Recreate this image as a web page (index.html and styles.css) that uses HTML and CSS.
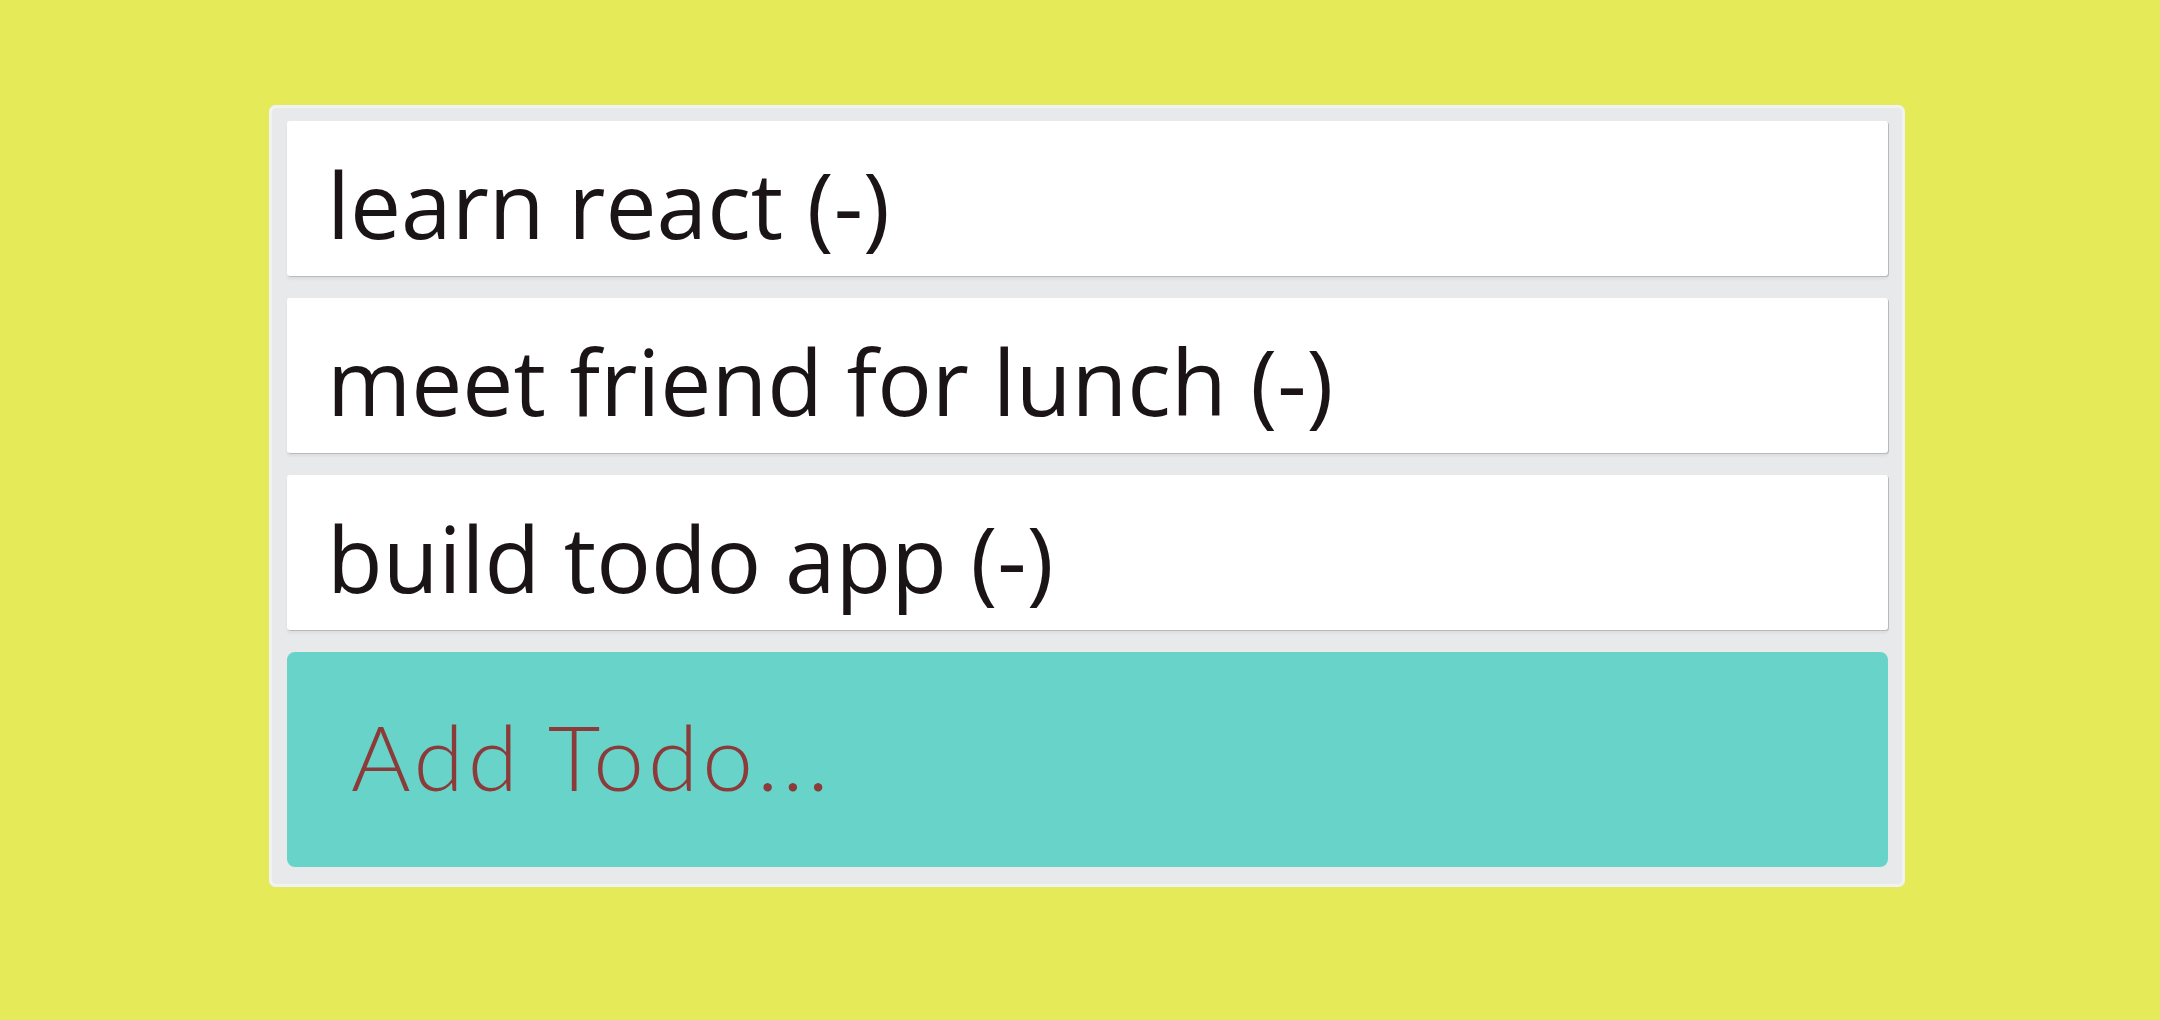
FILE: index.html
```html
<!DOCTYPE html>
<html>
<head>
<meta charset="utf-8">
<link rel="stylesheet" href="styles.css">
</head>
<body>
<div class="card">
  <ul class="todos">
    <li class="todo">learn react (-)</li>
    <li class="todo">meet friend for lunch (-)</li>
    <li class="todo">build todo app (-)</li>
  </ul>
  <input class="add" type="text" placeholder="Add Todo...">
</div>
</body>
</html>
```
FILE: styles.css
```css
html, body {
  margin: 0;
  padding: 0;
  background: #e4ea58;
  height: 100%;
}
body {
  padding-top: 105px;
  box-sizing: border-box;
}
.card {
  margin-left: 269px;
  width: 1636px;
  box-sizing: border-box;
  padding: 16px 17px 20px 18px;
  background: #e8e9eb;
  border-radius: 7px;
  box-shadow: inset 0 0 0 3px #f1f2f3;
  display: flex;
  flex-direction: column;
  gap: 22px;
}
.todos {
  list-style: none;
  margin: 0;
  padding: 0;
  display: flex;
  flex-direction: column;
  gap: 22px;
}
.todo {
  height: 155px;
  box-sizing: border-box;
  padding: 21px 0 0 40px;
  background: #ffffff;
  border-radius: 3px;
  box-shadow: 1px 1px 0 #b9babd, 0 3px 3px rgba(0,0,0,0.06);
  font-family: "Open Sans", "Noto Sans", sans-serif;
  font-size: 91px;
  line-height: 124px;
  color: #1b1416;
}
.add {
  display: block;
  width: 100%;
  height: 215px;
  box-sizing: border-box;
  margin: 0;
  padding: 0 0 8px 64px;
  border: none;
  outline: none;
  border-radius: 8px;
  background: #67d3c9;
  font-family: "Lato", "Open Sans", sans-serif;
  font-weight: 300;
  font-size: 91px;
  letter-spacing: 4px;
  color: #8a3b3a;
}
.add::placeholder {
  color: #8a3b3a;
  opacity: 1;
}
```
